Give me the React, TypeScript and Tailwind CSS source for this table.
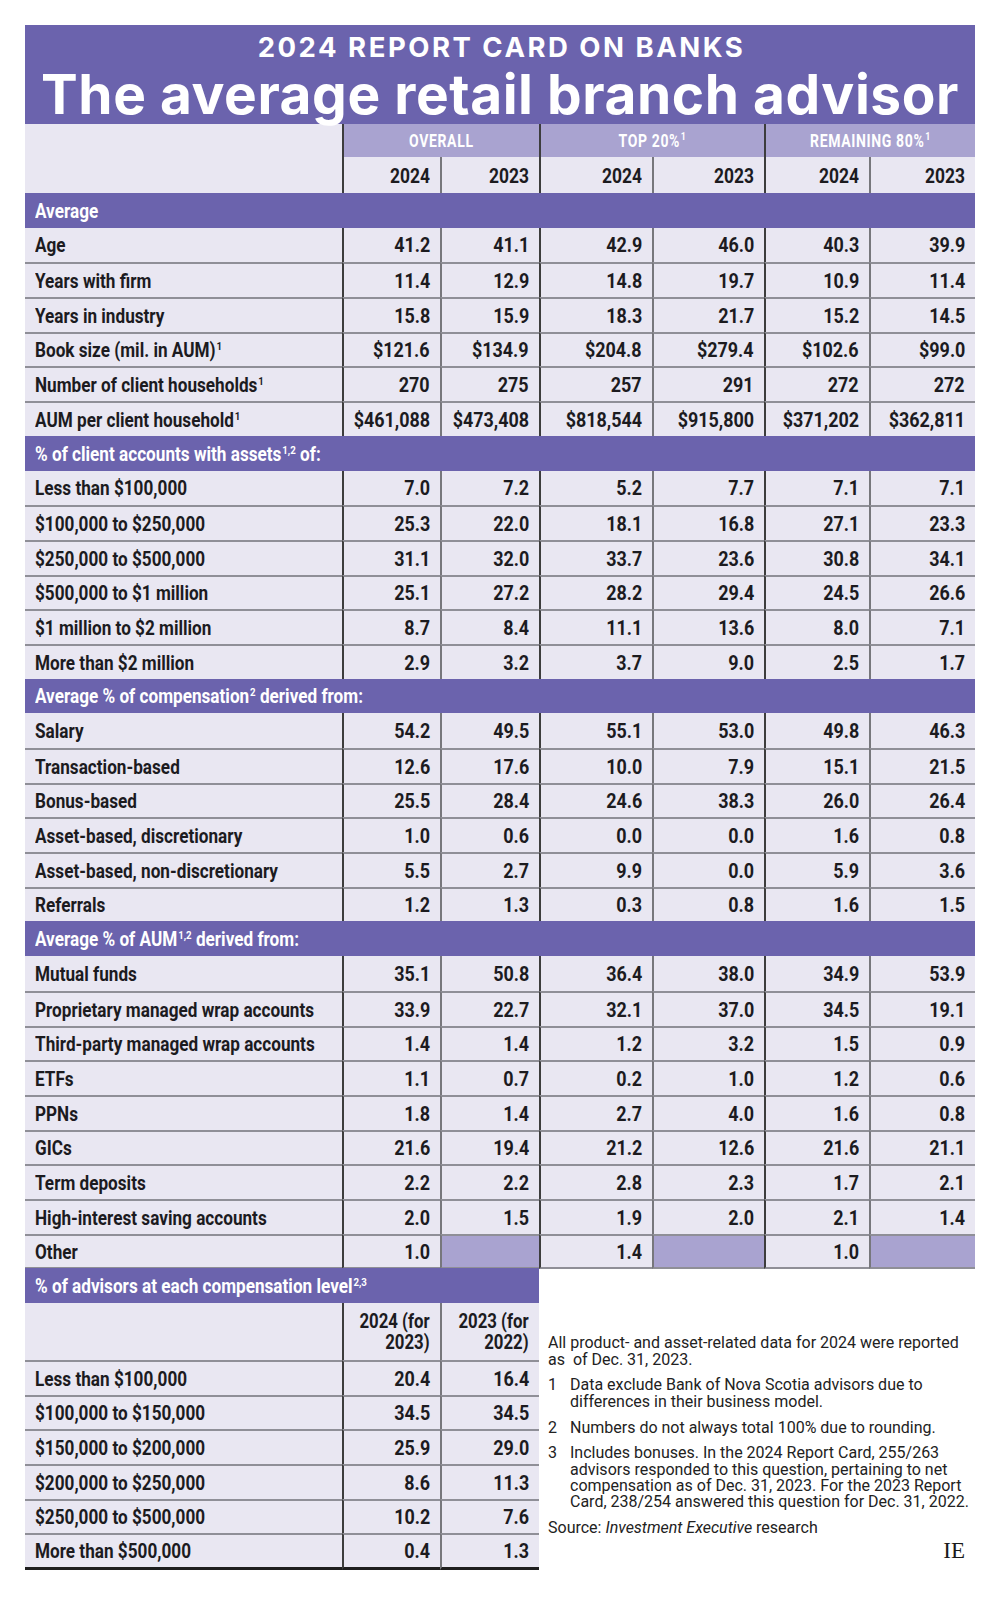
import type { ReactNode } from 'react'

type Row = { label: ReactNode; values: (string | null)[] }
type Section = { title: ReactNode; rows: Row[] }

const COND = "font-['Roboto','Liberation_Sans',sans-serif]"
const COLS = 'grid grid-cols-[317px_98px_99px_113px_112px_105px_106px]'

// narrow the bold face to the condensed look of the print table
const SQ_L = 'inline-block origin-left scale-x-[0.88] whitespace-nowrap'
const SQ_R = 'inline-block origin-right scale-x-[0.92] whitespace-nowrap'

// vertical rule per column: dark between groups, grey inside a group
const VLINE = [
  '',
  'border-l-2 border-l-[#3d3d3d]',
  'border-l-2 border-l-[#77777c]',
  'border-l-2 border-l-[#3d3d3d]',
  'border-l-2 border-l-[#77777c]',
  'border-l-2 border-l-[#3d3d3d]',
  'border-l-2 border-l-[#77777c]',
]

function Sup({ children }: { children: ReactNode }) {
  return <span className="relative -top-[7px] ml-[1px] text-[11px] leading-none">{children}</span>
}

const SECTIONS: Section[] = [
  {
    title: 'Average',
    rows: [
      { label: 'Age', values: ['41.2', '41.1', '42.9', '46.0', '40.3', '39.9'] },
      { label: 'Years with firm', values: ['11.4', '12.9', '14.8', '19.7', '10.9', '11.4'] },
      { label: 'Years in industry', values: ['15.8', '15.9', '18.3', '21.7', '15.2', '14.5'] },
      {
        label: <>Book size (mil. in AUM)<Sup>1</Sup></>,
        values: ['$121.6', '$134.9', '$204.8', '$279.4', '$102.6', '$99.0'],
      },
      {
        label: <>Number of client households<Sup>1</Sup></>,
        values: ['270', '275', '257', '291', '272', '272'],
      },
      {
        label: <>AUM per client household<Sup>1</Sup></>,
        values: ['$461,088', '$473,408', '$818,544', '$915,800', '$371,202', '$362,811'],
      },
    ],
  },
  {
    title: <>% of client accounts with assets<Sup>1,2</Sup> of:</>,
    rows: [
      { label: 'Less than $100,000', values: ['7.0', '7.2', '5.2', '7.7', '7.1', '7.1'] },
      { label: '$100,000 to $250,000', values: ['25.3', '22.0', '18.1', '16.8', '27.1', '23.3'] },
      { label: '$250,000 to $500,000', values: ['31.1', '32.0', '33.7', '23.6', '30.8', '34.1'] },
      { label: '$500,000 to $1 million', values: ['25.1', '27.2', '28.2', '29.4', '24.5', '26.6'] },
      { label: '$1 million to $2 million', values: ['8.7', '8.4', '11.1', '13.6', '8.0', '7.1'] },
      { label: 'More than $2 million', values: ['2.9', '3.2', '3.7', '9.0', '2.5', '1.7'] },
    ],
  },
  {
    title: <>Average % of compensation<Sup>2</Sup> derived from:</>,
    rows: [
      { label: 'Salary', values: ['54.2', '49.5', '55.1', '53.0', '49.8', '46.3'] },
      { label: 'Transaction-based', values: ['12.6', '17.6', '10.0', '7.9', '15.1', '21.5'] },
      { label: 'Bonus-based', values: ['25.5', '28.4', '24.6', '38.3', '26.0', '26.4'] },
      { label: 'Asset-based, discretionary', values: ['1.0', '0.6', '0.0', '0.0', '1.6', '0.8'] },
      { label: 'Asset-based, non-discretionary', values: ['5.5', '2.7', '9.9', '0.0', '5.9', '3.6'] },
      { label: 'Referrals', values: ['1.2', '1.3', '0.3', '0.8', '1.6', '1.5'] },
    ],
  },
  {
    title: <>Average % of AUM<Sup>1,2</Sup> derived from:</>,
    rows: [
      { label: 'Mutual funds', values: ['35.1', '50.8', '36.4', '38.0', '34.9', '53.9'] },
      { label: 'Proprietary managed wrap accounts', values: ['33.9', '22.7', '32.1', '37.0', '34.5', '19.1'] },
      { label: 'Third-party managed wrap accounts', values: ['1.4', '1.4', '1.2', '3.2', '1.5', '0.9'] },
      { label: 'ETFs', values: ['1.1', '0.7', '0.2', '1.0', '1.2', '0.6'] },
      { label: 'PPNs', values: ['1.8', '1.4', '2.7', '4.0', '1.6', '0.8'] },
      { label: 'GICs', values: ['21.6', '19.4', '21.2', '12.6', '21.6', '21.1'] },
      { label: 'Term deposits', values: ['2.2', '2.2', '2.8', '2.3', '1.7', '2.1'] },
      { label: 'High-interest saving accounts', values: ['2.0', '1.5', '1.9', '2.0', '2.1', '1.4'] },
      { label: 'Other', values: ['1.0', null, '1.4', null, '1.0', null] },
    ],
  },
]

const COMP_ROWS: [string, string, string][] = [
  ['Less than $100,000', '20.4', '16.4'],
  ['$100,000 to $150,000', '34.5', '34.5'],
  ['$150,000 to $200,000', '25.9', '29.0'],
  ['$200,000 to $250,000', '8.6', '11.3'],
  ['$250,000 to $500,000', '10.2', '7.6'],
  ['More than $500,000', '0.4', '1.3'],
]

function SectionBar({ children }: { children: ReactNode }) {
  return (
    <div className="flex h-[34.7px] items-center bg-[#6b63ad] pl-[10px] pt-[2px] text-[19.5px] font-bold text-white">
      <span className={SQ_L}>{children}</span>
    </div>
  )
}

function DataRow({ row, first, last }: { row: Row; first: boolean; last: boolean }) {
  const hline = first ? '' : 'border-t-2 border-t-[#8f8f97]'
  const bottom = last ? 'border-b-2 border-b-[#8f8f97]' : ''
  return (
    <div className={`${COLS} h-[34.7px]`}>
      <div className={`flex items-center bg-[#e9e7f2] pl-[10px] pt-[2px] ${hline} ${bottom}`}>
        <span className={SQ_L}>{row.label}</span>
      </div>
      {row.values.map((v, i) => (
        <div
          key={i}
          className={`flex items-center justify-end pr-[10px] pt-[2px] ${VLINE[i + 1]} ${hline} ${bottom} ${
            v === null ? 'bg-[#a9a3d0]' : 'bg-[#e9e7f2]'
          }`}
        >
          {v && <span className={SQ_R}>{v}</span>}
        </div>
      ))}
    </div>
  )
}

function GroupHead({ title, cols }: { title: ReactNode; cols: string }) {
  return (
    <div className="flex flex-col border-l-2 border-l-[#3d3d3d]">
      <div className="flex h-[33px] items-center justify-center bg-[#a9a3d0] pt-[2px] text-[17.5px] font-bold tracking-[0.8px] text-white">
        <span className="inline-block scale-x-[0.8] whitespace-nowrap">{title}</span>
      </div>
      <div className={`grid h-[36px] ${cols} bg-[#e9e7f2] text-[20px] font-bold`}>
        <div className="flex items-center justify-end pr-[10px] pt-[2px]">
          <span className="inline-block origin-right scale-x-[0.87]">2024</span>
        </div>
        <div className="flex items-center justify-end border-l-2 border-l-[#77777c] pr-[10px] pt-[2px]">
          <span className="inline-block origin-right scale-x-[0.87]">2023</span>
        </div>
      </div>
    </div>
  )
}

export default function App() {
  return (
    <div className="h-[1597px] w-[1000px] bg-white px-[25px] pt-[25px] text-[#1c1b1f]">
      <div className="w-[950px]">
        <div className="h-[99px] bg-[#6b63ad] pt-[8px] text-center text-white font-['Inter',sans-serif] font-bold">
          <div className="pl-[3px] text-[27.5px] leading-[28px] tracking-[2.5px]">2024 REPORT CARD ON BANKS</div>
          <div className="relative z-10 mt-[6px] text-[55px] leading-[55px] tracking-[0.55px]">
            The average retail branch advisor
          </div>
        </div>

        <div className={COND}>
          <div className="grid h-[69px] grid-cols-[317px_197px_225px_211px] bg-[#e9e7f2]">
            <div />
            <GroupHead title="OVERALL" cols="grid-cols-[96px_99px]" />
            <GroupHead title={<>TOP 20%<Sup>1</Sup></>} cols="grid-cols-[111px_112px]" />
            <GroupHead title={<>REMAINING 80%<Sup>1</Sup></>} cols="grid-cols-[103px_106px]" />
          </div>

          <div className="text-[19.5px] font-bold">
            {SECTIONS.map((s, si) => (
              <div key={si}>
                <SectionBar>{s.title}</SectionBar>
                {s.rows.map((r, ri) => (
                  <DataRow
                    key={ri}
                    row={r}
                    first={ri === 0}
                    last={si === SECTIONS.length - 1 && ri === s.rows.length - 1}
                  />
                ))}
              </div>
            ))}
          </div>

          <div className="flex">
            <div className="w-[514px] text-[19.5px] font-bold">
              <SectionBar>
                % of advisors at each compensation level<Sup>2,3</Sup>
              </SectionBar>
              <div className="grid h-[57px] grid-cols-[317px_98px_99px] bg-[#e9e7f2] text-[20px] leading-[21px]">
                <div />
                <div className="flex items-center justify-end border-l-2 border-l-[#3d3d3d] pr-[10px] text-right">
                  <span className="inline-block origin-right scale-x-[0.84] whitespace-nowrap">
                    2024 (for
                    <br />
                    2023)
                  </span>
                </div>
                <div className="flex items-center justify-end border-l-2 border-l-[#77777c] pr-[10px] text-right">
                  <span className="inline-block origin-right scale-x-[0.84] whitespace-nowrap">
                    2023 (for
                    <br />
                    2022)
                  </span>
                </div>
              </div>
              {COMP_ROWS.map(([label, a, b], i) => {
                const last = i === COMP_ROWS.length - 1
                const cls = `border-t-2 border-t-[#8f8f97] ${last ? 'border-b-[3px] border-b-[#1e1e1e]' : ''}`
                return (
                  <div key={label} className="grid h-[34.7px] grid-cols-[317px_98px_99px] bg-[#e9e7f2]">
                    <div className={`flex items-center pl-[10px] pt-[2px] ${cls}`}>
                      <span className={SQ_L}>{label}</span>
                    </div>
                    <div className={`flex items-center justify-end pr-[10px] pt-[2px] border-l-2 border-l-[#3d3d3d] ${cls}`}>
                      <span className={SQ_R}>{a}</span>
                    </div>
                    <div className={`flex items-center justify-end pr-[10px] pt-[2px] border-l-2 border-l-[#77777c] ${cls}`}>
                      <span className={SQ_R}>{b}</span>
                    </div>
                  </div>
                )
              })}
            </div>

            <div className="flex-1 pl-[9px] pt-[67px] font-['Roboto',sans-serif] text-[16px] leading-[16.3px] text-[#222]">
              <div className="flex flex-col gap-[9.5px] whitespace-nowrap">
                <p>
                  All product- and asset-related data for 2024 were reported
                  <br />
                  as&nbsp; of Dec. 31, 2023.
                </p>
                <div className="flex">
                  <span className="w-[22px]">1</span>
                  <p>
                    Data exclude Bank of Nova Scotia advisors due to
                    <br />
                    differences in their business model.
                  </p>
                </div>
                <div className="flex">
                  <span className="w-[22px]">2</span>
                  <p>Numbers do not always total 100% due to rounding.</p>
                </div>
                <div className="flex">
                  <span className="w-[22px]">3</span>
                  <p>
                    Includes bonuses. In the 2024 Report Card, 255/263
                    <br />
                    advisors responded to this question, pertaining to net
                    <br />
                    compensation as of Dec. 31, 2023. For the 2023 Report
                    <br />
                    Card, 238/254 answered this question for Dec. 31, 2022.
                  </p>
                </div>
                <p>
                  Source: <i>Investment Executive</i> research
                </p>
              </div>
              <div className="mt-[4px] pr-[10px] text-right font-['Liberation_Serif',serif] text-[23px] leading-[22px] text-[#1a1a1a]">
                IE
              </div>
            </div>
          </div>
        </div>
      </div>
    </div>
  )
}
